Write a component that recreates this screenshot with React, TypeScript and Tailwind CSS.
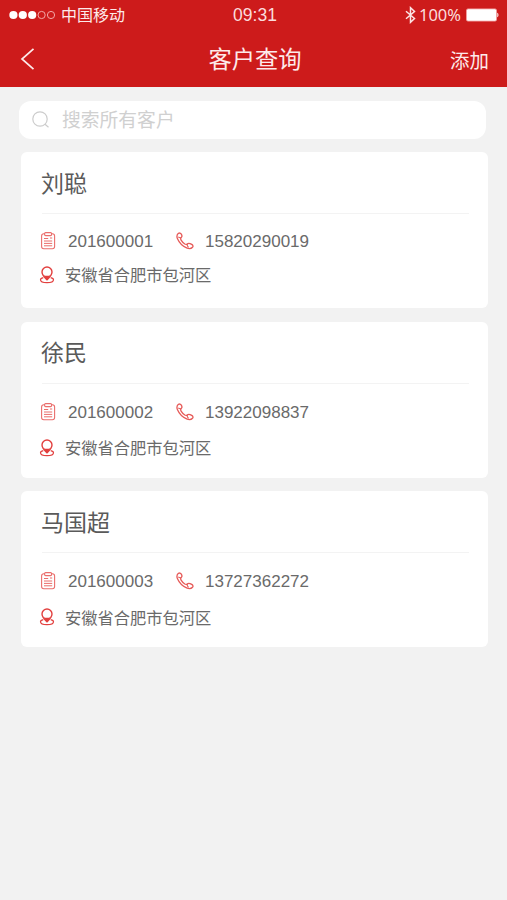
import clsx from "clsx";

interface Customer {
  code: string;
  name: string;
  phone: string;
  address: string;
}

const CUSTOMERS: Customer[] = [
  { code: "201600001", name: "刘聪", phone: "15820290019", address: "安徽省合肥市包河区" },
  { code: "201600002", name: "徐民", phone: "13922098837", address: "安徽省合肥市包河区" },
  { code: "201600003", name: "马国超", phone: "13727362272", address: "安徽省合肥市包河区" },
];

function ClipboardIcon() {
  return (
    <svg width="16" height="18" viewBox="0 0 16 18" fill="none" stroke="#ea6e6c" strokeWidth="1.1">
      <rect x="1.6" y="1.8" width="13" height="15" rx="2.2" />
      <rect x="4.6" y="0.6" width="7" height="3" rx="1" fill="#fff" />
      <path d="M4 6.500h4.200M10 6h2.200M4 9h8.200M4 11.400h8.200M4 13.800h8.200" strokeWidth="1" />
    </svg>
  );
}

function PhoneIcon() {
  return (
    <svg
      width="18"
      height="18"
      viewBox="0 0 18 18"
      fill="none"
      stroke="#e65a58"
      strokeWidth="1.3"
      strokeLinejoin="round"
    >
      <path d="M2.200 1.600C3.200.8 4.400.8 5.100 1.800c1 1.400 1.100 2.700.2 3.600-.9.900-.8 1.700-.2 2.700 1 1.600 2.200 2.900 3.700 3.900 1 .6 1.700.5 2.400-.1 1-.9 2.500-.8 4.500.5 1.400.9 1.700 1.900.8 2.900-1.300 1.400-3.600 1.600-5.900.6C6.800 14.300 3.300 10.900 1.500 6.800.6 4.700.9 2.800 2.200 1.600z" />
      <path d="M2.300 4.900c1 .9 2 1.100 3 .5M11.200 11.900c-.3 1.400.2 2.600 1.400 3.500" strokeWidth="1.1" />
    </svg>
  );
}

function PinIcon() {
  return (
    <svg width="16" height="18" viewBox="0 0 16 18" fill="none" stroke="#e2403f" strokeWidth="1.4">
      <path d="M8 13.800C5 10.900 3 9 3 6a5 5 0 0 1 10 0c0 3-2 4.900-5 7.800z" />
      <path d="M4.600 9.200c2.200.8 4.600.8 6.800 0-.8 1.800-1.900 3.200-3.400 4.800-1.500-1.600-2.600-3-3.400-4.800z" fill="#e2403f" stroke="none" />
      <path d="M4.300 11.600C2.400 12 1.500 12.900 1.500 13.800c0 1.700 2.600 2.900 6.500 2.900s6.500-1.200 6.500-2.900c0-.9-.9-1.800-2.800-2.200" strokeWidth="1.2" />
    </svg>
  );
}

function StatusBar() {
  return (
    <div className="grid h-[31px] grid-cols-3 items-center pr-[8px] pl-[9px] text-[16px]">
      <div className="flex items-center">
        <svg className="-mt-[2px]" width="47" height="10" viewBox="0 0 47 10">
          {[0, 1, 2, 3, 4].map((i) => (
            <circle
              key={i}
              cx={4.4 + i * 9.4}
              cy="5"
              r={i < 3 ? 4.1 : 3.6}
              fill={i < 3 ? "#fff" : "none"}
              stroke={i < 3 ? "none" : "#f6b5b5"}
              strokeWidth="0.9"
            />
          ))}
        </svg>
        <span className="ml-[5px] whitespace-nowrap text-[#fdeaea]">中国移动</span>
      </div>
      <span className="pl-[2px] text-center text-[17.5px] text-[#fbdcdc]">09:31</span>
      <div className="flex items-center justify-end">
        <svg className="-mt-[2px]" width="11" height="18" viewBox="0 0 11 18" fill="none" stroke="#fde4e4" strokeWidth="1.5">
          <path d="M1 5.300l8.500 7.200L5.500 16.300V1.700l4 3.800L1 12.700" />
        </svg>
        <span className="ml-[3px] font-['Noto_Sans',sans-serif] text-[16.5px] text-[#fbdcdc]">100%</span>
        <svg className="-mt-[2px] ml-[5px]" width="33" height="14" viewBox="0 0 33 14">
          <rect x="0.5" y="0.9" width="30" height="12.2" rx="1.5" fill="#fff" stroke="#f3a3a3" strokeWidth="0.8" />
          <path d="M31.300 4.700c1.500.4 1.500 4.200 0 4.600z" fill="#fff" />
        </svg>
      </div>
    </div>
  );
}

function NavBar() {
  return (
    <div className="grid h-14 grid-cols-3 items-center pr-[18px] pl-5">
      <svg width="16" height="24" viewBox="0 0 16 24" fill="none" stroke="#fdeaea" strokeWidth="1.7">
        <path d="M13.500 1.800L2 12l11.500 10.200" />
      </svg>
      <h1 className="pt-[2px] pl-px text-center text-[23.3px] whitespace-nowrap text-[#fdeaea]">客户查询</h1>
      <button className="justify-self-end pt-[5px] text-[19.5px] text-[#fdeaea]">添加</button>
    </div>
  );
}

function CustomerCard({ customer, compact }: { customer: Customer; compact: boolean }) {
  return (
    <article className="h-[156px] rounded-md bg-white pr-[19px] pl-5">
      <h2 className="flex h-[61px] items-center pt-[3px] text-[23px] text-[#5a5a5a]">{customer.name}</h2>
      <div className="ml-px h-px bg-[#f3f3f3]" />
      <div className={clsx("flex h-5 items-center text-[17px] text-[#6a6a6a]", compact ? "mt-[17px]" : "mt-[18px]")}>
        <span className="-ml-px">
          <ClipboardIcon />
        </span>
        <span className={clsx("ml-[12px] w-[108px]", compact ? "pt-px" : "pt-[2px]")}>{customer.code}</span>
        <PhoneIcon />
        <span className="ml-[11px] pt-[2px]">{customer.phone}</span>
      </div>
      <div className={clsx("flex h-5 items-center text-[16.25px] text-[#6a6a6a]", compact ? "mt-[14px]" : "mt-4")}>
        <span className="-ml-[2px]">
          <PinIcon />
        </span>
        <span className={clsx("ml-[10px]", !compact && "pt-[2px]")}>{customer.address}</span>
      </div>
    </article>
  );
}

export default function App() {
  return (
    <div className="min-h-screen bg-[#f2f2f2] font-['Liberation_Sans','Noto_Sans_CJK_SC',sans-serif]">
      <header className="h-[87px] bg-[#cd1b1b] text-white">
        <StatusBar />
        <NavBar />
      </header>
      <main>
        <label className="mt-[14px] mr-[21px] ml-[19px] flex h-[38px] items-center rounded-xl bg-white pl-3">
          <svg width="20" height="20" viewBox="0 0 20 20" fill="none" stroke="#ccc" strokeWidth="1.2">
            <circle cx="9" cy="9" r="7.2" />
            <path d="M14 14.300l3.500 3" />
          </svg>
          <input
            className="ml-[11px] flex-1 pt-[2px] text-[18.8px] outline-none placeholder:text-[#d0d0d0]"
            placeholder="搜索所有客户"
          />
        </label>
        <section className="mt-[13px] mr-[19px] ml-[21px] flex flex-col gap-[13.5px]">
          {CUSTOMERS.map((customer, i) => (
            <CustomerCard key={customer.code} customer={customer} compact={i === 0} />
          ))}
        </section>
      </main>
    </div>
  );
}
